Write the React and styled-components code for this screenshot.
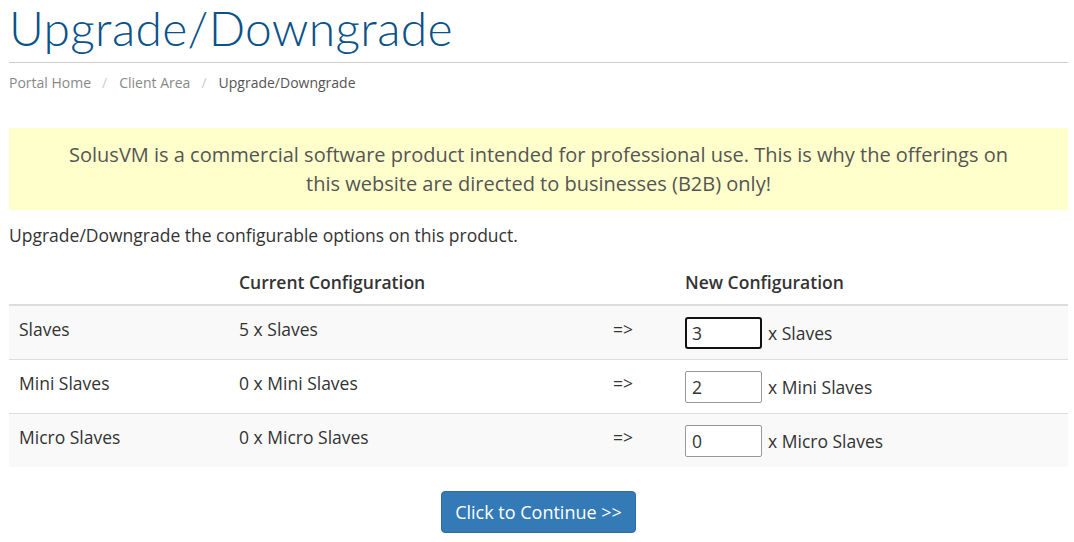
import styled, { createGlobalStyle } from "styled-components";

const GlobalStyle = createGlobalStyle`
  body {
    margin: 0;
    background: #fff;
    font-family: "Open Sans", "Liberation Sans", sans-serif;
    color: #333;
  }
`

const Page = styled.div`
  width: 1059px;
  padding: 0 6px 0 9px;
`

const Title = styled.h1`
  margin: 2px 0 0;
  font-family: Lato, "Open Sans", sans-serif;
  font-weight: 300;
  font-size: 48px;
  line-height: 52px;
  color: #0b5289;
  letter-spacing: 0.3px;
`

const Rule = styled.hr`
  margin: 8px 0 0;
  border: 0;
  border-top: 1px solid #ccc;
`

const Crumbs = styled.ol`
  display: flex;
  list-style: none;
  margin: 0;
  padding: 9px 0 0;
  font-size: 14px;
  line-height: 22px;
`

const Crumb = styled.li`
  color: ${({ active }) => (active ? '#555' : '#888')};

  &:not(:first-child)::before {
    content: "/";
    color: #ccc;
    padding: 0 12px 0 11px;
  }
`

const Notice = styled.div`
  margin-top: 34px;
  padding: 12px 50px;
  background: #ffffcc;
  color: #555;
  font-size: 20px;
  line-height: 29px;
  text-align: center;
`

const Intro = styled.p`
  margin: 12px 0 0;
  font-size: 17.5px;
  line-height: 26px;
`

const Table = styled.div`
  margin-top: 12px;
  font-size: 17.5px;
  line-height: 24px;
`

const Row = styled.div`
  display: grid;
  grid-template-columns: 220px 374px 72px 1fr;
  align-items: ${({ head }) => (head ? 'center' : 'start')};
  background: ${({ striped }) => (striped ? '#f9f9f9' : '#fff')};
  border-bottom: ${({ head }) => (head ? '2px solid #ddd' : '0')};
  border-top: ${({ divided }) => (divided ? '1px solid #ddd' : '0')};
  padding: ${({ head }) => (head ? '10px 0' : '11px 0 10px')};
  font-weight: ${({ head }) => (head ? 600 : 400)};
`

const Cell = styled.div`
  padding: 0 10px;
`

const InputCell = styled.div`
  display: flex;
  align-items: center;
  gap: 6px;
  padding: 0 10px;
`

const Qty = styled.input`
  box-sizing: border-box;
  width: 77px;
  height: 32px;
  font: inherit;
  color: #333;
  border: ${({ focused }) => (focused ? '2px solid #111' : '1px solid #999')};
  border-radius: ${({ focused }) => (focused ? '3px' : '2px')};
  padding: 0 0 0 ${({ focused }) => (focused ? '5px' : '6px')};
  outline: none;
  background: #fff;
`

const Actions = styled.div`
  display: flex;
  justify-content: center;
  margin-top: 24px;
`

const Button = styled.button`
  width: 195px;
  height: 42px;
  border: 1px solid #2e6da4;
  border-radius: 4px;
  background: #337ab7;
  color: #fff;
  font-family: "Open Sans", sans-serif;
  font-size: 18px;
`

const options = [
  { name: 'Slaves', current: 5, value: 3 },
  { name: 'Mini Slaves', current: 0, value: 2 },
  { name: 'Micro Slaves', current: 0, value: 0 },
]

export default function App() {
  return (
    <Page>
      <GlobalStyle />
      <Title>Upgrade/Downgrade</Title>
      <Rule />
      <Crumbs>
        <Crumb>Portal Home</Crumb>
        <Crumb>Client Area</Crumb>
        <Crumb active>Upgrade/Downgrade</Crumb>
      </Crumbs>
      <Notice>
        SolusVM is a commercial software product intended for professional use. This is why the offerings on this website are directed to businesses (B2B) only!
      </Notice>
      <Intro>Upgrade/Downgrade the configurable options on this product.</Intro>
      <Table>
        <Row head>
          <Cell />
          <Cell>Current Configuration</Cell>
          <Cell />
          <Cell>New Configuration</Cell>
        </Row>
        {options.map((o, i) => (
          <Row key={o.name} striped={i % 2 === 0} divided={i > 0}>
            <Cell>{o.name}</Cell>
            <Cell>{o.current} x {o.name}</Cell>
            <Cell>=&gt;</Cell>
            <InputCell>
              <Qty defaultValue={o.value} focused={i === 0} />
              <span>x {o.name}</span>
            </InputCell>
          </Row>
        ))}
      </Table>
      <Actions>
        <Button>Click to Continue &gt;&gt;</Button>
      </Actions>
    </Page>
  );
}
